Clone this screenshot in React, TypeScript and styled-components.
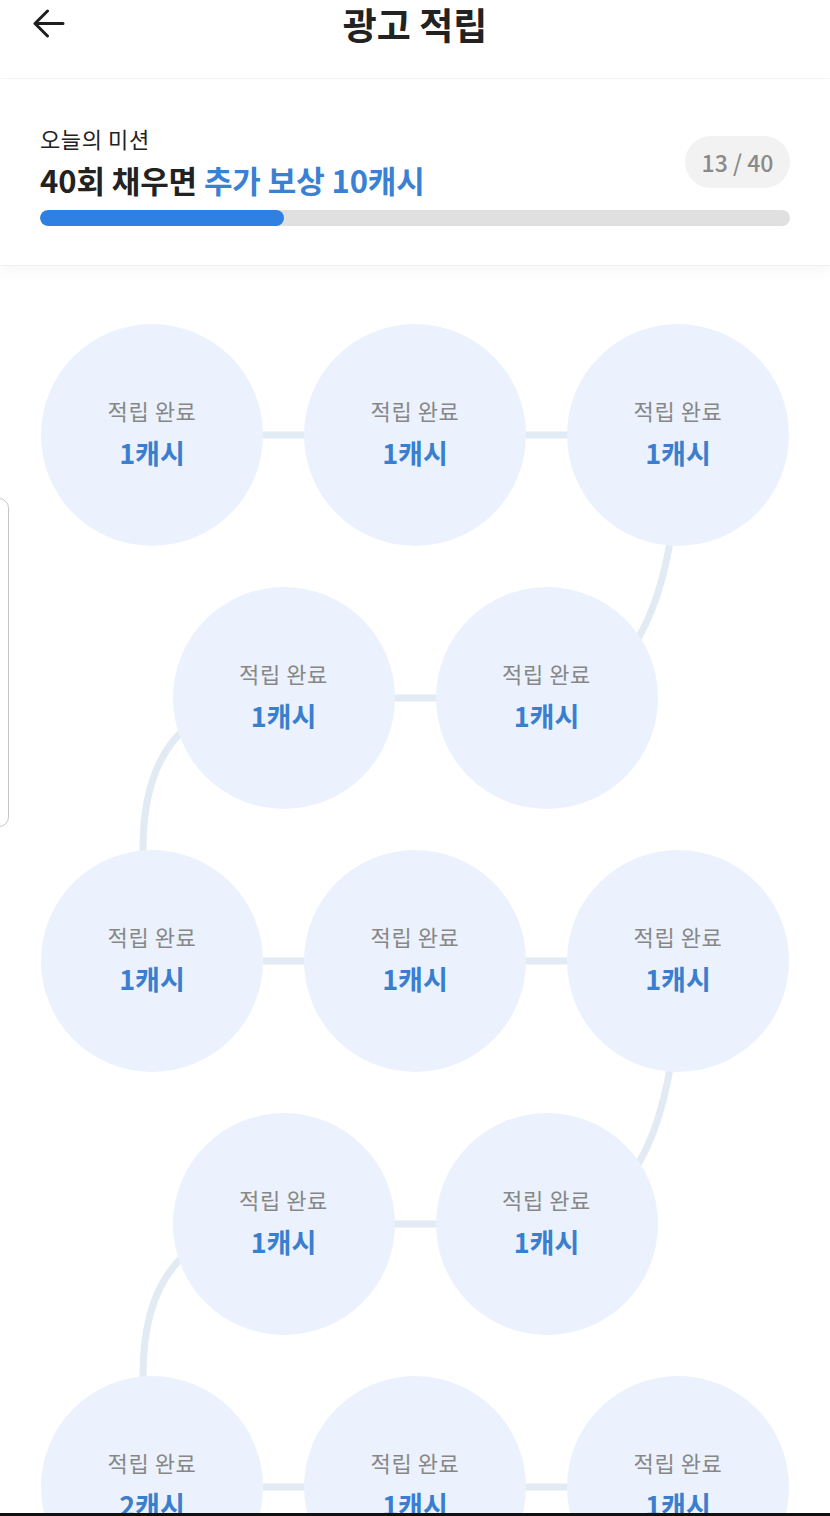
import styled, { createGlobalStyle } from "styled-components";

const GlobalStyle = createGlobalStyle`
  html, body {
    margin: 0;
    padding: 0;
    overflow: hidden;
    background: #ffffff;
  }
  body {
    font-family: "Noto Sans CJK KR", "Noto Sans", sans-serif;
    color: #222222;
  }
`;

const Page = styled.div`
  width: 830px;
  position: relative;
`;

const Header = styled.header`
  height: 78px;
  display: grid;
  grid-template-columns: 1fr auto 1fr;
  align-items: start;
  border-bottom: 1px solid #f6f6f6;
  box-shadow: 0 2px 4px rgba(0, 0, 0, 0.015);
`;

const BackButton = styled.button`
  justify-self: start;
  margin: 9px 0 0 32px;
  padding: 0;
  border: none;
  background: none;
  width: 33px;
  height: 29px;
  display: flex;
`;

const Title = styled.h1`
  margin: 0;
  padding-top: 1px;
  font-size: 37px;
  line-height: 46px;
  font-weight: 700;
  color: #222222;
`;

const MissionCard = styled.section`
  padding: 44px 40px 39px;
  background: #ffffff;
  border-bottom: 1px solid #f1f1f1;
  box-shadow: 0 6px 14px rgba(0, 0, 0, 0.035);
  position: relative;
  z-index: 2;
`;

const MissionTop = styled.div`
  display: flex;
  align-items: center;
  justify-content: space-between;
`;

const MissionText = styled.div`
  display: flex;
  flex-direction: column;
  gap: 7px;
`;

const Subtitle = styled.span`
  font-size: 22px;
  line-height: 30px;
  color: #222222;
  letter-spacing: 0.6px;
`;

const Headline = styled.span`
  font-size: 31px;
  line-height: 40px;
  font-weight: 700;
  color: #222222;
  letter-spacing: -0.1px;
`;

const Accent = styled.span`
  color: #3a81d3;
`;

const CountBadge = styled.span`
  width: 105px;
  height: 52px;
  border-radius: 26px;
  background: #f2f2f2;
  color: #8a8a8a;
  font-size: 23px;
  font-weight: 500;
  display: flex;
  align-items: center;
  justify-content: center;
`;

const Track = styled.div`
  margin-top: 10px;
  height: 16px;
  border-radius: 8px;
  background: #e0e0e0;
  overflow: hidden;
`;

const Fill = styled.div`
  height: 100%;
  border-radius: 8px;
  background: #2f80e2;
`;

const Board = styled.section`
  position: relative;
  padding-top: 58px;
  display: flex;
  flex-direction: column;
  gap: 41px;
`;

const Connectors = styled.svg`
  position: absolute;
  top: 0;
  left: 0;
  z-index: 0;
`;

const Row = styled.div`
  display: flex;
  justify-content: center;
  gap: 41px;
`;

const Stamp = styled.div`
  position: relative;
  z-index: 1;
  width: 222px;
  height: 222px;
  border-radius: 50%;
  background: #ebf2fd;
  display: flex;
  flex-direction: column;
  align-items: center;
  justify-content: center;
  gap: 10px;
  padding-bottom: 5px;
  box-sizing: border-box;
`;

const StampLabel = styled.span`
  font-size: 22px;
  line-height: 30px;
  color: #878787;
  letter-spacing: 0.6px;
`;

const StampAmount = styled.span`
  font-size: 27px;
  line-height: 36px;
  font-weight: 700;
  color: #3a7fcf;
`;

const EdgeHandle = styled.div`
  position: fixed;
  left: -12px;
  top: 498px;
  width: 19px;
  height: 327px;
  border: 1.5px solid #c6c6c6;
  border-radius: 10px;
  z-index: 5;
`;

const ScreenEdge = styled.div`
  position: fixed;
  left: 0;
  right: 0;
  bottom: 0;
  height: 3px;
  background: #111111;
  z-index: 6;
`;

const rows = [
  ["1캐시", "1캐시", "1캐시"],
  ["1캐시", "1캐시"],
  ["1캐시", "1캐시", "1캐시"],
  ["1캐시", "1캐시"],
  ["2캐시", "1캐시", "1캐시"],
];

const done = 13;
const goal = 40;

const snakePath =
  "M152 169 H678 C678 353 620 432 546 432 H283 C180 432 143 493 143 583 V695 H678 " +
  "C678 879 620 958 546 958 H283 C180 958 143 1019 143 1109 V1221 H678";

const App = () => {
  return (
    <Page>
      <GlobalStyle />
      <Header>
        <BackButton aria-label="뒤로">
          <svg width="33" height="29" viewBox="0 0 33 29" fill="none">
            <path
              d="M31 14.5 H3 M15.5 2 L3 14.5 L15.5 27"
              stroke="#1e1e1e"
              strokeWidth="3"
              strokeLinecap="round"
              strokeLinejoin="round"
            />
          </svg>
        </BackButton>
        <Title>광고 적립</Title>
        <span />
      </Header>

      <MissionCard>
        <MissionTop>
          <MissionText>
            <Subtitle>오늘의 미션</Subtitle>
            <Headline>
              40회 채우면 <Accent>추가 보상 10캐시</Accent>
            </Headline>
          </MissionText>
          <CountBadge>
            {done} / {goal}
          </CountBadge>
        </MissionTop>
        <Track>
          <Fill style={{ width: `${(done / goal) * 100}%` }} />
        </Track>
      </MissionCard>

      <Board>
        <Connectors width="830" height="1400" viewBox="0 0 830 1400">
          <path
            d={snakePath}
            stroke="#e2eaf4"
            strokeWidth="7"
            fill="none"
          />
        </Connectors>
        {rows.map((row, i) => (
          <Row key={i}>
            {row.map((amount, j) => (
              <Stamp key={j}>
                <StampLabel>적립 완료</StampLabel>
                <StampAmount>{amount}</StampAmount>
              </Stamp>
            ))}
          </Row>
        ))}
      </Board>

      <EdgeHandle />
      <ScreenEdge />
    </Page>
  );
};

export default App;
